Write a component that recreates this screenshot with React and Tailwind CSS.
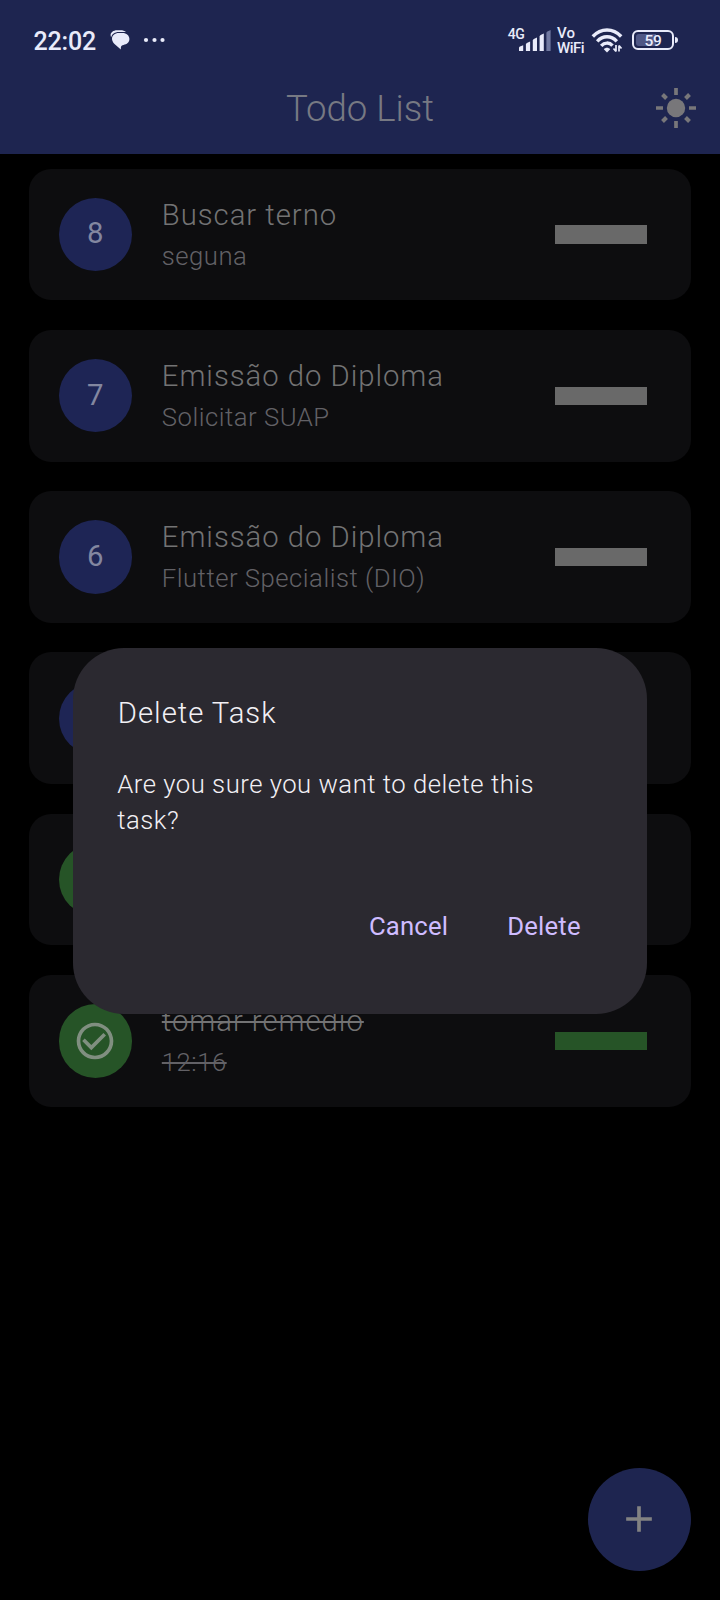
import React from "react";

const tasks = [
  { badge: "8", title: "Buscar terno", note: "seguna" },
  { badge: "7", title: "Emissão do Diploma", note: "Solicitar SUAP" },
  { badge: "6", title: "Emissão do Diploma", note: "Flutter Specialist (DIO)" },
  { badge: "", title: "", note: "" },
  { done: true, title: "", note: "" },
  { done: true, title: "tomar remedio", note: "12:16" },
];

function StatusBar() {
  return (
    <div className="flex h-[80px] items-center justify-between pl-[33.500px] pr-[42px] text-[#e9ebfa]">
      <div className="flex items-center">
        <span className="w-[64px] whitespace-nowrap pt-[3px] text-[25px] font-medium leading-[30px] tracking-[-0.2px]">22:02</span>
        <svg className="ml-[12.500px]" width="21" height="20" viewBox="0 0 21 20" fill="currentColor">
          <path d="M1.200 7.200C2 4 5 2.200 8.500 2.100H16C14.500 .8 12.800 .2 10.500 .2H7C3.200 .2 .6 2.400 .6 5C.6 5.800 .8 6.500 1.200 7.200Z" />
          <path d="M8.800 3H12.500C16.500 3 19.400 5.600 19.400 9C19.400 12.300 16.800 14.300 13.500 14.900C12 15.200 11 16 10.900 17.200L10.800 19.600L4.500 14C2.800 12.200 2 10.600 2 8.800C2 5.500 4.800 3 8.800 3Z" />
        </svg>
        <svg className="ml-[12px]" width="24" height="6" viewBox="0 0 24 6" fill="currentColor">
          <circle cx="3" cy="3" r="2.1" />
          <circle cx="11.500" cy="3" r="2.100" />
          <circle cx="19.500" cy="3" r="2.100" />
        </svg>
      </div>
      <div className="flex h-[30px] items-start">
        <span className="-mr-[7px] pt-[1px] text-[14px] font-medium leading-[16px] tracking-[-0.4px]">4G</span>
        <svg className="mt-[5px]" width="34" height="22" viewBox="0 0 34 22" fill="currentColor">
          <path d="M1 18Q1 17 2 16.600L5.200 15.200V21H1Z" />
          <path d="M7.900 14.500Q7.900 13.500 8.900 13L12.100 11.500V21H7.900Z" />
          <path d="M14.800 10.500Q14.800 9.500 15.800 9L19 7.500V21H14.800Z" />
          <path d="M21.600 6.500Q21.600 5.500 22.600 5L25.800 3.500V21H21.600Z" />
          <path d="M28.400 3Q28.400 2 29.400 1.500L32.600 0V21H28.400Z" fill="#7078a0" />
        </svg>
        <div className="ml-[5.500px] w-[30px] whitespace-nowrap pt-[0.500px] text-[15px] font-medium leading-[15px] tracking-[-0.5px]">
          <div className="tracking-[0.2px]">Vo</div>
          <div>WiFi</div>
        </div>
        <svg className="ml-[4px] mt-[2px]" width="32" height="26" viewBox="0 0 32 26" fill="none" stroke="currentColor" strokeWidth="3.400">
          <path d="M1.800 9.500C10 .8 22 .8 30.200 9.500" />
          <path d="M6.200 14.300C12 8.200 20 8.200 25.800 14.300" />
          <path d="M10.200 18.800C13.500 15.200 18.500 15.200 21.500 18.600" />
          <path d="M12.800 22.200C14.500 20.200 17.500 20.200 19.200 22.200L16 25.500Z" fill="currentColor" stroke="none" />
          <path d="M25 18V24.500M22.500 21.500L25 24.500M28 24.500V18.500M28 18.500L30.500 21.500" strokeWidth="1.700" />
        </svg>
        <div className="ml-[9px] mt-[5px] flex items-center">
          <div className="flex h-[20px] w-[42px] items-center rounded-[6px] border-2 border-current p-[2px]">
            <div className="flex h-[12px] w-full items-center justify-center rounded-[3px] bg-[linear-gradient(90deg,#4f5785_59%,transparent_59%)]">
              <span className="pt-[2px] text-[15.500px] font-medium leading-[14px] tracking-[-0.2px]">59</span>
            </div>
          </div>
          <div className="ml-[1px] h-[6px] w-[3px] rounded-r-sm bg-current" />
        </div>
      </div>
    </div>
  );
}

function TaskCard({ task }) {
  const struck = task.done ? "line-through decoration-[1.5px]" : "";
  return (
    <div className="flex h-[131.800px] items-center rounded-[22px] bg-[#0d0d0f] pl-[29.300px] pr-[44px]">
      <div className={"flex size-[73.300px] shrink-0 items-center justify-center rounded-full text-[29.300px] leading-none text-[#8387a0] " + (task.done ? "bg-[#265427]" : "bg-[#1e2555]")}>
        {task.done ? (
          <svg width="44" height="44" viewBox="0 0 24 24" fill="#808f80">
            <path d="M16.590 7.580L10 14.170l-3.590-3.580L5 12l5 5 8-8zM12 2C6.480 2 2 6.480 2 12s4.480 10 10 10 10-4.480 10-10S17.520 2 12 2zm0 18c-4.420 0-8-3.580-8-8s3.580-8 8-8 8 3.580 8 8-3.580 8-8 8z" />
          </svg>
        ) : (
          <span className="-mt-[1px]">{task.badge}</span>
        )}
      </div>
      <div className="ml-[29.900px] flex-1 whitespace-nowrap pt-[0.500px] font-light">
        <div className="h-[44px] text-[29.300px] leading-[44px] tracking-[0.97px] text-[#737374]">
          <span className={struck}>{task.title}</span>
        </div>
        <div className="h-[40px] text-[25.700px] leading-[39.400px] tracking-[0.5px] text-[#626166]">
          <span className={struck}>{task.note}</span>
        </div>
      </div>
      <div className={"h-[18.300px] w-[92px] " + (task.done ? "bg-[#265427]" : "bg-[#696969]")} />
    </div>
  );
}

export default function App() {
  return (
    <div className="relative h-[1600px] w-[720px] overflow-hidden bg-black font-[Roboto,sans-serif]">
      <header className="h-[153.500px] bg-[#1e2550]">
        <StatusBar />
        <div className="grid h-[56px] grid-cols-[80px_1fr_80px] items-center">
          <h1 className="col-start-2 pt-[2px] text-center text-[36.600px] font-light leading-[44px] text-[#777983]">Todo List</h1>
          <svg className="ml-[14px]" width="44" height="44" viewBox="0 0 44 44" fill="#78777a" stroke="#78777a" strokeWidth="3.700">
            <circle cx="22" cy="22" r="9.200" stroke="none" />
            <path d="M22 2V9M22 35V42M2 22H9M35 22H42" />
            <path d="M8.500 8.500L12.500 12.500M31.500 31.500L35.500 35.500M8.500 35.500L12.500 31.500M31.500 12.500L35.500 8.500" strokeWidth="4" />
          </svg>
        </div>
      </header>
      <main className="flex flex-col gap-[29.500px] px-[29.300px] pt-[15px]">
        {tasks.map((task, i) => (
          <TaskCard key={i} task={task} />
        ))}
      </main>

      <button aria-label="+" className="absolute bottom-[29.500px] right-[29.500px] flex size-[102.500px] items-center justify-center rounded-full bg-[#1e2550]">
        <svg width="44" height="44" viewBox="0 0 24 24" fill="#828282">
          <path d="M19 13h-6v6h-2v-6H5v-2h6V5h2v6h6v2z" />
        </svg>
      </button>

      <div role="dialog" className="absolute left-[73.300px] top-[647.700px] flex h-[366.300px] w-[573.400px] flex-col rounded-[51px] bg-[#2b2930] px-[44px] pt-[43px]">
        <h2 className="pl-[0.500px] text-[29.300px] font-light leading-[44px] tracking-[0.97px] text-[#f2f0f5]">Delete Task</h2>
        <p className="mt-[31px] pr-4 text-[25.700px] font-light leading-[36.600px] tracking-[0.5px] text-[#f2f0f5]">
          Are you sure you want to delete this task?
        </p>
        <div className="mt-[69px] flex justify-end gap-[59px] pr-[22px] text-[25.700px] leading-[36px] tracking-[0.18px] text-[#cfbcff]">
          <button>Cancel</button>
          <button>Delete</button>
        </div>
      </div>
    </div>
  );
}
